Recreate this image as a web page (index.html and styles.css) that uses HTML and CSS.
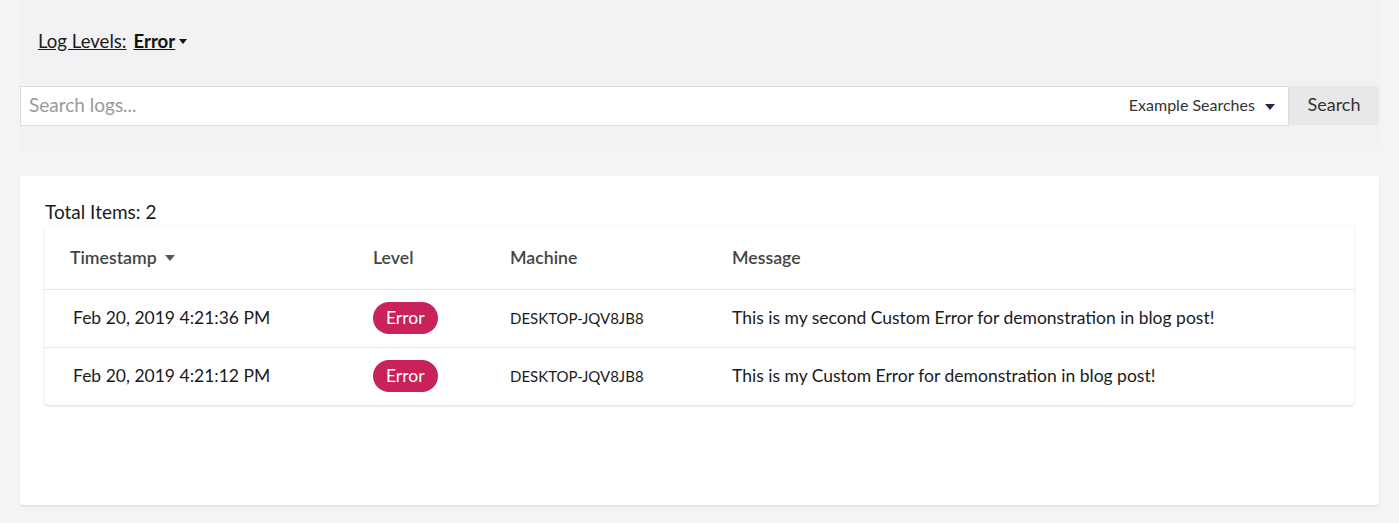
FILE: index.html
```html
<!DOCTYPE html>
<html lang="en">
<head>
    <meta charset="UTF-8">
    <meta name="viewport" content="width=device-width, initial-scale=1.0">
    <title>Logs</title>
    <link rel="stylesheet" href="styles.css">
</head>
<body>
    <div class="filter-panel">
        <div class="log-levels">
            <span class="label">Log Levels:</span>
            <span class="level-pick">Error</span>
            <span class="caret small"></span>
        </div>
        <div class="search-bar">
            <div class="search-box">
                <span class="placeholder">Search logs...</span>
                <span class="examples">Example Searches <span class="caret navy"></span></span>
            </div>
            <button class="search-btn">Search</button>
        </div>
    </div>
    <div class="results-card">
        <div class="total">Total Items: 2</div>
        <div class="log-table">
            <div class="row head">
                <div class="cell">Timestamp <span class="caret grey"></span></div>
                <div class="cell">Level</div>
                <div class="cell">Machine</div>
                <div class="cell">Message</div>
            </div>
            <div class="row">
                <div class="cell time">Feb 20, 2019 4:21:36 PM</div>
                <div class="cell"><span class="badge">Error</span></div>
                <div class="cell machine">DESKTOP-JQV8JB8</div>
                <div class="cell">This is my second Custom Error for demonstration in blog post!</div>
            </div>
            <div class="row">
                <div class="cell time">Feb 20, 2019 4:21:12 PM</div>
                <div class="cell"><span class="badge">Error</span></div>
                <div class="cell machine">DESKTOP-JQV8JB8</div>
                <div class="cell">This is my Custom Error for demonstration in blog post!</div>
            </div>
        </div>
    </div>
</body>
</html>
```

FILE: styles.css
```css
body {
    margin: 0;
    background-color: #f5f3f3;
    font-family: Lato, "Open Sans", sans-serif;
    color: #1b1b1b;
}
.filter-panel {
    margin: 0 18px 0 20px;
    background-color: #f2f2f5;
    padding: 27px 0 24px 0;
}
.log-levels {
    display: flex;
    align-items: center;
    font-size: 18.6px;
    padding-left: 18px;
    height: 28px;
}
.log-levels .label {
    text-decoration: underline;
    margin-right: 7px;
}
.level-pick {
    font-weight: bold;
    text-decoration: underline;
    color: #111;
}
.caret {
    display: inline-block;
    width: 0;
    height: 0;
    border-left: 5px solid transparent;
    border-right: 5px solid transparent;
    border-top: 6px solid #111;
    vertical-align: middle;
}
.caret.small {
    margin-left: 4px;
    border-left-width: 4px;
    border-right-width: 4px;
    border-top-width: 5px;
}
.caret.navy {
    border-top-color: #1f2a44;
    margin-left: 6px;
}
.caret.grey {
    border-top-color: #555;
    margin-left: 4px;
    margin-top: -3px;
}
.search-bar {
    display: flex;
    margin-top: 31px;
    margin-right: 2px;
}
.search-box {
    flex: 1;
    display: flex;
    align-items: center;
    justify-content: space-between;
    height: 35px;
    background: #fff;
    border: 1px solid #dcdcdc;
    padding: 0 13px 3px 8px;
}
.placeholder {
    font-size: 19px;
    color: #9a9a9a;
}
.examples {
    font-size: 16px;
    color: #333;
}
.search-btn {
    width: 90px;
    height: 39px;
    border: none;
    border-radius: 0 3px 3px 0;
    background-color: #e8e8ea;
    font-family: Lato, sans-serif;
    font-size: 18px;
    color: #333;
    padding-bottom: 4px;
}
.results-card {
    margin: 26px 20px 18px 20px;
    background: #fff;
    border-radius: 3px;
    box-shadow: 0 1px 2px rgba(0, 0, 0, 0.12);
    padding: 24px 25px 99px 25px;
    height: 206px;
}
.total {
    font-size: 19px;
    height: 26px;
    line-height: 24px;
}
.log-table {
    background: #fff;
    border-radius: 4px;
    box-shadow: 0 1px 3px rgba(0, 0, 0, 0.15);
}
.row {
    display: grid;
    grid-template-columns: 303px 137px 222px 1fr;
    align-items: center;
    height: 57px;
    border-top: 1px solid #e5e5e5;
    font-size: 17.5px;
}
.row.head {
    height: 63px;
    border-top: none;
    color: #454545;
    font-size: 17.7px;
    font-weight: 600;
}
.cell {
    padding-left: 25px;
    padding-bottom: 2px;
}
.row.head .cell {
    padding-bottom: 0;
}
.cell.time {
    padding-left: 28px;
}
.machine {
    font-size: 15px;
}
.badge {
    display: inline-block;
    background-color: #c9215a;
    color: #fff;
    border-radius: 16px;
    padding: 0 13px;
    height: 32px;
    line-height: 32px;
    font-size: 17.5px;
}
```
